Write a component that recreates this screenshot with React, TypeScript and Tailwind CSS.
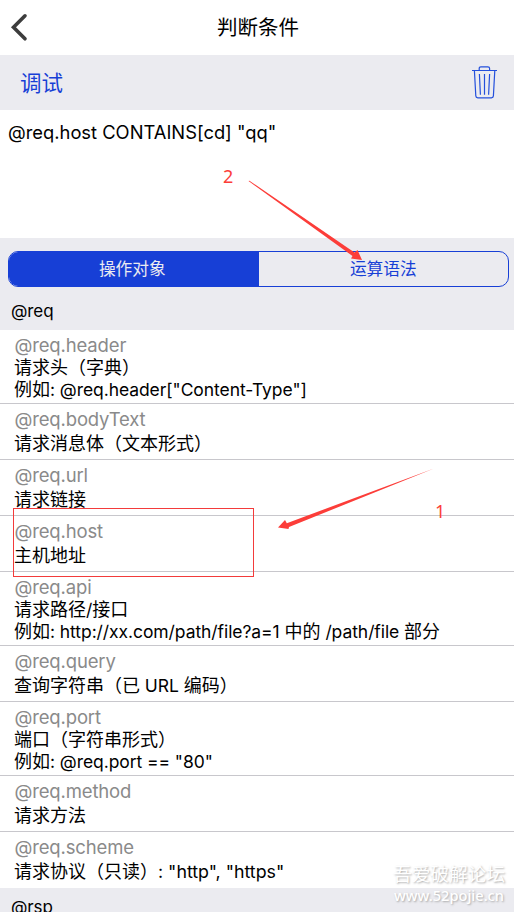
import React from "react";

type Item = { name: string; lines: string[]; wide?: boolean };

const items: Item[] = [
  { name: "@req.header", lines: ["请求头（字典）", '例如: @req.header["Content-Type"]'] },
  { name: "@req.bodyText", lines: ["请求消息体（文本形式）"] },
  { name: "@req.url", lines: ["请求链接"] },
  { name: "@req.host", lines: ["主机地址"] },
  { name: "@req.api", lines: ["请求路径/接口", "例如: http://xx.com/path/file?a=1 中的 /path/file 部分"] },
  { name: "@req.query", lines: ["查询字符串（已 URL 编码）"] },
  { name: "@req.port", lines: ["端口（字符串形式）", '例如: @req.port == "80"'] },
  { name: "@req.method", lines: ["请求方法"] },
  { name: "@req.scheme", lines: ['请求协议（只读）: "http", "https"'], wide: true },
];

// Latin runs are set slightly tighter than the Chinese text around them.
function Mixed({ text, wide }: { text: string; wide?: boolean }) {
  const runs = text.match(/[\x20-\x7e]+|[^\x20-\x7e]+/g) ?? [];
  return (
    <>
      {runs.map((run, i) =>
        /^[\x20-\x7e]/.test(run) ? (
          <span key={i} className={wide ? "text-[17.8px]" : "text-[17.5px] tracking-[-0.07px]"}>
            {run}
          </span>
        ) : (
          <span key={i}>{run}</span>
        ),
      )}
    </>
  );
}

function Row({ item, last }: { item: Item; last: boolean }) {
  const tall = item.lines.length > 1;
  return (
    <li
      className={`${tall ? "h-[74px]" : "h-14"} ${last ? "" : "border-b border-[#c8c7cc]"} pl-[14px] whitespace-nowrap`}
    >
      <div
        className={`${tall ? "h-[27px]" : "h-7"} pt-[3px] pl-[0.5px] text-[18.5px] leading-6 tracking-[-0.15px] text-[#8a8a8a]`}
      >
        {item.name}
      </div>
      {item.lines.map((line) => (
        <div key={line} className={`${tall ? "h-[21.5px] leading-[21.5px]" : "h-6 leading-6"} text-[18px] text-black`}>
          <Mixed text={line} wide={item.wide} />
        </div>
      ))}
    </li>
  );
}

export default function App() {
  return (
    <div className="relative h-[912px] w-[514px] overflow-hidden bg-white font-['Inter','Noto_Sans_CJK_SC',sans-serif] text-black">
      <header className="grid h-[55px] grid-cols-[60px_1fr_58px] items-center">
        <svg className="ml-[9px] h-[30px] w-5" viewBox="0 0 20 30" fill="none" stroke="#3d3d3d" strokeWidth="3.6" strokeLinecap="round">
          <path d="M16 2.8 4.5 14.3 16 25.8" />
        </svg>
        <h1 className="text-center text-[20.5px] leading-[30px]">判断条件</h1>
      </header>

      <div className="flex h-[55px] items-center justify-between bg-[#ebebf0] pr-[17px] pl-5 text-[#173fd6]">
        <button className="text-[21.5px] leading-[30px]">调试</button>
        <svg className="h-[35px] w-[25px]" viewBox="0 0 25 35" fill="none" stroke="#2450dc" strokeWidth="1.2">
          <path d="M0 5.5h25M7.2 5.3V3.5q0-1.7 1.7-1.7h7q1.7 0 1.7 1.7v1.8M2.4 5.5l1.4 25.4q.1 1.9 2 1.9h13.6q1.9 0 2-1.9l1.4-25.4M7.4 9l1 20.7M12.5 9v20.7M17.6 9l-1 20.7" />
        </svg>
      </div>

      <div className="h-32 pt-[10px] pl-2 text-[18.35px] leading-6 whitespace-nowrap">
        @req.host CONTAINS[cd] "qq"
      </div>

      <div className="h-[92px] bg-[#ebebf0] pt-[13px]">
        <div className="ml-2 flex h-9 w-[501px] overflow-hidden rounded-[10px] border border-[#173fd6] text-[16.7px]">
          <button className="flex w-[249.5px] items-center justify-center bg-[#173fd6] pt-0.5 pr-[3px] text-[#ebebf0]">操作对象</button>
          <button className="flex flex-1 items-center justify-center pt-0.5 text-[#173fd6]">运算语法</button>
        </div>
        <div className="mt-[12px] pl-[11px] text-[17px] leading-6 tracking-[-0.1px]">@req</div>
      </div>

      <ul>
        {items.map((item, i) => (
          <Row key={item.name} item={item} last={i === items.length - 1} />
        ))}
      </ul>

      <div className="h-6 bg-[#ebebf0] pt-[7px] pl-[11px] text-[17px] leading-6 tracking-[-0.1px]">@rsp</div>

      <div className="absolute top-[508px] left-[13px] h-[69px] w-[241px] border border-[#f33b3b]" />
      <svg className="absolute inset-0 h-[912px] w-[514px]" viewBox="0 0 514 912" fill="#fc3d39">
        <path d="M248.5 181 249.5 180.8 354.5 252.5 357.5 250 362 260 351 258.5 352.5 256Z" />
        <path d="M434 468.5 289 527 288.5 529 278 527.5 285 520 286.8 523.2Z" />
      </svg>
      <span className="absolute top-[164px] left-[223px] font-['Noto_Sans',sans-serif] text-[18px] leading-6 text-[#fc3d39]">2</span>
      <span className="absolute top-[499px] left-[435px] font-['Noto_Sans',sans-serif] text-[18px] leading-6 text-[#fc3d39]">1</span>

      <div className="absolute top-[863px] left-[393px] whitespace-nowrap text-white [text-shadow:1px_1px_2px_#aaaaaa]">
        <div className="text-[18.7px] leading-6">吾爱破解论坛</div>
        <div className="pl-px font-['Noto_Sans',sans-serif] text-[14.6px] leading-4 font-medium">www.52pojie.cn</div>
      </div>
    </div>
  );
}
